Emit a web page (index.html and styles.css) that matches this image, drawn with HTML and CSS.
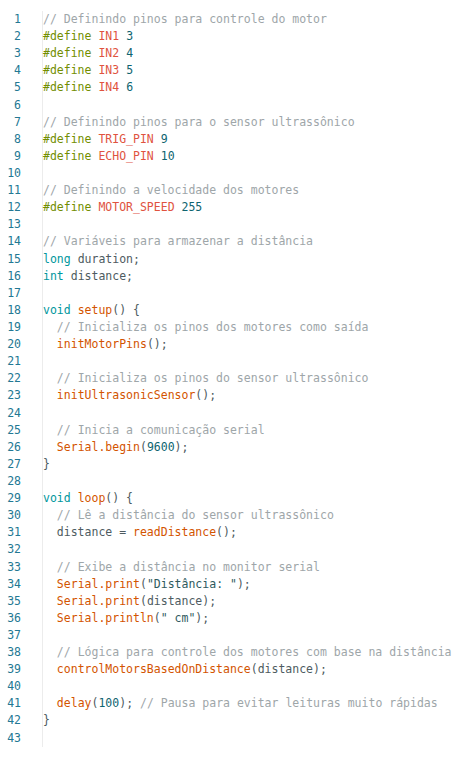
FILE: index.html
```html
<!DOCTYPE html>
<html lang="pt">
<head>
<meta charset="utf-8">
<title>Código Arduino</title>
<link rel="stylesheet" href="styles.css">
</head>
<body>
<div class="editor">
<div class="row"><span class="ln">1</span><span class="code"><span class="c">// Definindo pinos para controle do motor</span></span></div>
<div class="row"><span class="ln">2</span><span class="code"><span class="p">#define</span> <span class="m">IN1</span> <span class="n">3</span></span></div>
<div class="row"><span class="ln">3</span><span class="code"><span class="p">#define</span> <span class="m">IN2</span> <span class="n">4</span></span></div>
<div class="row"><span class="ln">4</span><span class="code"><span class="p">#define</span> <span class="m">IN3</span> <span class="n">5</span></span></div>
<div class="row"><span class="ln">5</span><span class="code"><span class="p">#define</span> <span class="m">IN4</span> <span class="n">6</span></span></div>
<div class="row"><span class="ln">6</span><span class="code"></span></div>
<div class="row"><span class="ln">7</span><span class="code"><span class="c">// Definindo pinos para o sensor ultrassônico</span></span></div>
<div class="row"><span class="ln">8</span><span class="code"><span class="p">#define</span> <span class="m">TRIG_PIN</span> <span class="n">9</span></span></div>
<div class="row"><span class="ln">9</span><span class="code"><span class="p">#define</span> <span class="m">ECHO_PIN</span> <span class="n">10</span></span></div>
<div class="row"><span class="ln">10</span><span class="code"></span></div>
<div class="row"><span class="ln">11</span><span class="code"><span class="c">// Definindo a velocidade dos motores</span></span></div>
<div class="row"><span class="ln">12</span><span class="code"><span class="p">#define</span> <span class="m">MOTOR_SPEED</span> <span class="n">255</span></span></div>
<div class="row"><span class="ln">13</span><span class="code"></span></div>
<div class="row"><span class="ln">14</span><span class="code"><span class="c">// Variáveis para armazenar a distância</span></span></div>
<div class="row"><span class="ln">15</span><span class="code"><span class="k">long</span> duration;</span></div>
<div class="row"><span class="ln">16</span><span class="code"><span class="k">int</span> distance;</span></div>
<div class="row"><span class="ln">17</span><span class="code"></span></div>
<div class="row"><span class="ln">18</span><span class="code"><span class="k">void</span> <span class="f">setup</span>() {</span></div>
<div class="row"><span class="ln">19</span><span class="code">  <span class="c">// Inicializa os pinos dos motores como saída</span></span></div>
<div class="row"><span class="ln">20</span><span class="code">  <span class="f">initMotorPins</span>();</span></div>
<div class="row"><span class="ln">21</span><span class="code"></span></div>
<div class="row"><span class="ln">22</span><span class="code">  <span class="c">// Inicializa os pinos do sensor ultrassônico</span></span></div>
<div class="row"><span class="ln">23</span><span class="code">  <span class="f">initUltrasonicSensor</span>();</span></div>
<div class="row"><span class="ln">24</span><span class="code"></span></div>
<div class="row"><span class="ln">25</span><span class="code">  <span class="c">// Inicia a comunicação serial</span></span></div>
<div class="row"><span class="ln">26</span><span class="code">  <span class="f">Serial.begin</span>(<span class="n">9600</span>);</span></div>
<div class="row"><span class="ln">27</span><span class="code">}</span></div>
<div class="row"><span class="ln">28</span><span class="code"></span></div>
<div class="row"><span class="ln">29</span><span class="code"><span class="k">void</span> <span class="f">loop</span>() {</span></div>
<div class="row"><span class="ln">30</span><span class="code">  <span class="c">// Lê a distância do sensor ultrassônico</span></span></div>
<div class="row"><span class="ln">31</span><span class="code">  distance = <span class="f">readDistance</span>();</span></div>
<div class="row"><span class="ln">32</span><span class="code"></span></div>
<div class="row"><span class="ln">33</span><span class="code">  <span class="c">// Exibe a distância no monitor serial</span></span></div>
<div class="row"><span class="ln">34</span><span class="code">  <span class="f">Serial.print</span>(<span class="s">"Distância: "</span>);</span></div>
<div class="row"><span class="ln">35</span><span class="code">  <span class="f">Serial.print</span>(distance);</span></div>
<div class="row"><span class="ln">36</span><span class="code">  <span class="f">Serial.println</span>(<span class="s">" cm"</span>);</span></div>
<div class="row"><span class="ln">37</span><span class="code"></span></div>
<div class="row"><span class="ln">38</span><span class="code">  <span class="c">// Lógica para controle dos motores com base na distância</span></span></div>
<div class="row"><span class="ln">39</span><span class="code">  <span class="f">controlMotorsBasedOnDistance</span>(distance);</span></div>
<div class="row"><span class="ln">40</span><span class="code"></span></div>
<div class="row"><span class="ln">41</span><span class="code">  <span class="f">delay</span>(<span class="n">100</span>); <span class="c">// Pausa para evitar leituras muito rápidas</span></span></div>
<div class="row"><span class="ln">42</span><span class="code">}</span></div>
<div class="row"><span class="ln">43</span><span class="code"></span></div>
</div>
</body>
</html>
```

FILE: styles.css
```css
html, body {
  margin: 0;
  padding: 0;
  background: #ffffff;
}

.editor {
  padding-top: 11px;
  font-family: "DejaVu Sans Mono", "Liberation Mono", monospace;
  font-size: 11.5px;
  line-height: 17.11px;
  color: #4e5b61;
}

.row {
  display: grid;
  grid-template-columns: 21px 21px 1fr;
  height: 17.11px;
}

.ln {
  grid-column: 1;
  text-align: right;
  color: #237893;
}

.code {
  grid-column: 3;
  white-space: pre;
  border-left: 1px solid #ececec;
  padding-left: 0;
}

.c { color: #9ea6a9; }
.p { color: #728e00; }
.m { color: #e0533f; }
.n { color: #0e6470; }
.k { color: #00979d; }
.f { color: #d35400; }
.s { color: #2f5a5e; }
```
